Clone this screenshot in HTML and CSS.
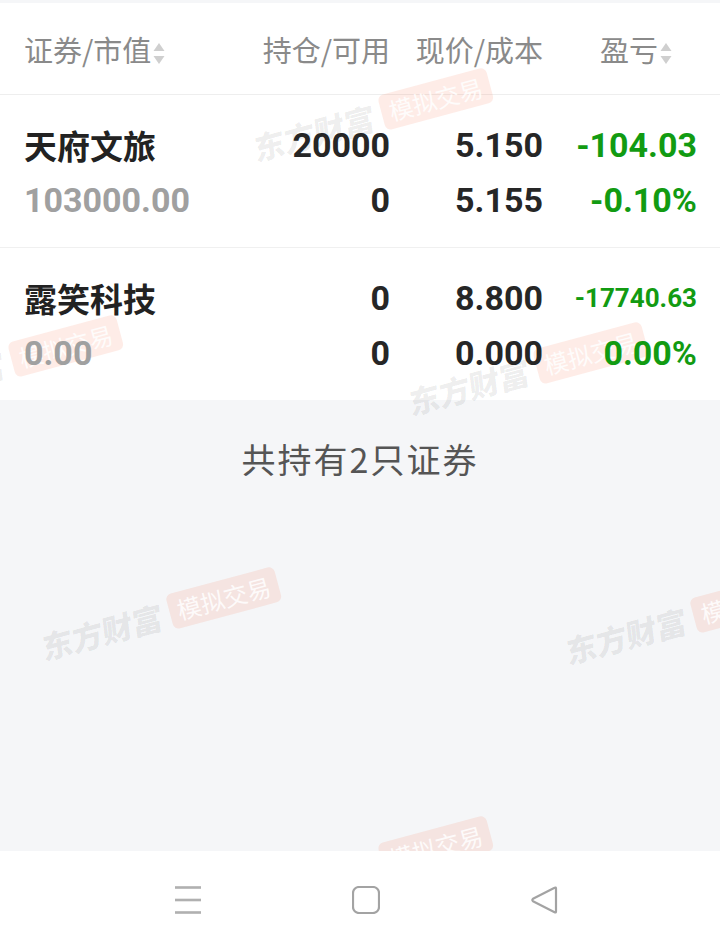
FILE: index.html
```html
<!DOCTYPE html>
<html lang="zh-CN">
<head>
    <meta charset="UTF-8">
    <meta name="viewport" content="width=device-width, initial-scale=1.0">
    <title>持仓</title>
    <link rel="stylesheet" href="styles.css">
</head>
<body>
    <div class="top-gap"></div>
    <div class="holdings">
        <div class="list-head">
            <div class="c1">证券/市值<svg class="sort" width="12" height="22" viewBox="0 0 12 22"><polygon points="0.5,8 6,0 11.5,8" /><polygon points="0.5,13 11.5,13 6,21" /></svg></div>
            <div class="c2">持仓/可用</div>
            <div class="c3">现价/成本</div>
            <div class="c4">盈亏<svg class="sort" width="12" height="22" viewBox="0 0 12 22"><polygon points="0.5,8 6,0 11.5,8" /><polygon points="0.5,13 11.5,13 6,21" /></svg></div>
        </div>

        <div class="stock">
            <div class="name">天府文旅</div>
            <div class="num">20000</div>
            <div class="num">5.150</div>
            <div class="num green">-104.03</div>
            <div class="mv">103000.00</div>
            <div class="num">0</div>
            <div class="num">5.155</div>
            <div class="num green">-0.10%</div>
        </div>

        <div class="stock last">
            <div class="name">露笑科技</div>
            <div class="num">0</div>
            <div class="num">8.800</div>
            <div class="num green small">-17740.63</div>
            <div class="mv">0.00</div>
            <div class="num">0</div>
            <div class="num">0.000</div>
            <div class="num green">0.00%</div>
        </div>
    </div>

    <div class="summary">共持有2只证券</div>

    <div class="navbar">
        <svg width="28" height="28" viewBox="0 0 28 28">
            <line x1="1" y1="1.5" x2="27" y2="1.5" />
            <line x1="1" y1="14" x2="27" y2="14" />
            <line x1="1" y1="26.5" x2="27" y2="26.5" />
        </svg>
        <svg width="28" height="28" viewBox="0 0 28 28">
            <rect x="1" y="1" width="26" height="26" rx="6" />
        </svg>
        <svg width="28" height="28" viewBox="0 0 28 28">
            <path d="M26 2.5 L26 25.5 Q26 27 24.6 26.2 L3 15.2 Q1.6 14 3 12.8 L24.6 1.8 Q26 1 26 2.5 Z" />
        </svg>
    </div>

    <div class="wm wm-1"><span class="wm-brand">东方财富</span><span class="wm-tag">模拟交易</span></div>
    <div class="wm wm-2"><span class="wm-brand">东方财富</span><span class="wm-tag">模拟交易</span></div>
    <div class="wm wm-3"><span class="wm-brand">东方财富</span><span class="wm-tag">模拟交易</span></div>
    <div class="wm wm-4"><span class="wm-brand">东方财富</span><span class="wm-tag">模拟交易</span></div>
    <div class="wm wm-5"><span class="wm-brand">东方财富</span><span class="wm-tag">模拟交易</span></div>
    <div class="wm wm-6"><span class="wm-brand">东方财富</span><span class="wm-tag">模拟交易</span></div>
</body>
</html>
```

FILE: styles.css
```css
body {
    margin: 0;
    height: 949px;
    display: flex;
    flex-direction: column;
    position: relative;
    overflow: hidden;
    background-color: #f5f6f8;
    font-family: Roboto, "Noto Sans CJK SC", sans-serif;
    color: #222;
}
.top-gap {
    height: 3px;
}
.holdings {
    background-color: #fff;
}
.list-head, .stock {
    display: grid;
    grid-template-columns: 1fr 150px 153px 154px;
    padding: 0 23px 0 24px;
}
/* text sits above the watermark, backgrounds below it */
.list-head > div, .stock > div, .summary {
    position: relative;
    z-index: 2;
}
.list-head {
    height: 91px;
    align-items: center;
    border-bottom: 1px solid #eeeeee;
    font-family: "Noto Sans CJK SC", sans-serif;
    font-size: 29px;
    color: #8a8a8a;
}
.list-head .c2, .list-head .c3 {
    text-align: right;
}
.list-head .c4 {
    text-align: right;
    padding-right: 25px;
}
.sort {
    vertical-align: -3px;
    margin-left: 2px;
    fill: #cfcfcf;
}
.stock {
    padding-top: 22px;
    padding-bottom: 20px;
    grid-auto-rows: 55px;
    align-items: center;
    border-bottom: 1px solid #f0f0f0;
}
.stock.last {
    border-bottom: none;
}
.name {
    font-family: "Noto Sans CJK SC", sans-serif;
    font-size: 33px;
    font-weight: bold;
    color: #222;
}
.mv {
    font-size: 34px;
    font-weight: bold;
    color: #a0a0a0;
}
.num {
    font-size: 34px;
    font-weight: bold;
    text-align: right;
    color: #262626;
}
.green {
    color: #129b12;
}
.num.small {
    font-size: 26px;
}
.summary {
    flex: 1;
    padding-top: 39px;
    line-height: 40px;
    text-align: center;
    font-family: "Noto Sans CJK SC", sans-serif;
    font-size: 34px;
    letter-spacing: 2px;
    color: #555;
}
.navbar {
    height: 98px;
    flex-shrink: 0;
    position: relative;
    z-index: 3;
    background-color: #fff;
    display: flex;
    justify-content: center;
    align-items: center;
    gap: 150px;
    padding-left: 12px;
}
.navbar svg {
    fill: none;
    stroke: #a3a3a3;
    stroke-width: 2.2;
    stroke-linejoin: round;
}
.navbar line {
    stroke: #b0b0b0;
    stroke-width: 2.6;
}

/* watermark */
.wm {
    position: absolute;
    z-index: 1;
    width: 244px;
    height: 36px;
    display: flex;
    align-items: center;
    gap: 8px;
    transform: rotate(-15deg);
    pointer-events: none;
    font-family: "Noto Sans CJK SC", sans-serif;
    white-space: nowrap;
}
.wm-brand {
    font-size: 31px;
    font-weight: 900;
    color: rgba(0, 0, 0, 0.075);
    transform: skewX(-8deg);
}
.wm-tag {
    font-size: 24px;
    line-height: 36px;
    padding: 0 8px;
    border-radius: 6px;
    background-color: rgba(245, 110, 70, 0.13);
    color: rgba(255, 255, 255, 0.85);
}
.wm-1 { left: 250px; top: 98px; }
.wm-2 { left: -120px; top: 345px; }
.wm-3 { left: 405px; top: 352px; }
.wm-4 { left: 38px; top: 597px; }
.wm-5 { left: 562px; top: 601px; }
.wm-6 { left: 250px; top: 846px; }
```
